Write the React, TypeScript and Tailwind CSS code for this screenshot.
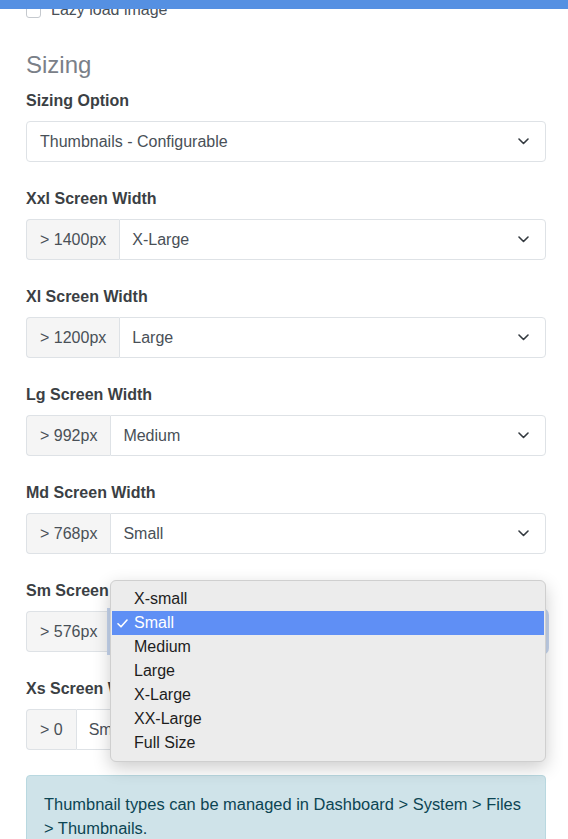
import type { ReactNode } from 'react';

const font = { fontFamily: '"Liberation Sans", Arial, sans-serif' };

function Chevron() {
  return (
    <svg className="w-[11px] h-[7px] text-[#343a40]" viewBox="0 0 11 7" fill="none" aria-hidden="true">
      <path d="M1 1l4.5 4.5L10 1" stroke="currentColor" strokeWidth="1.6" strokeLinecap="round" strokeLinejoin="round" />
    </svg>
  );
}

function SelectBox({ value, focus }: { value: string; focus?: boolean }) {
  return (
    <div
      className={
        focus
          ? 'flex-1 h-[41px] flex items-center justify-between pl-[12px] pr-[16px] border border-[#86b7fe] rounded-r-[4px] ring-[3px] ring-[#c6d5ee] bg-white text-[16px] text-[#495057]'
          : 'flex-1 h-[41px] flex items-center justify-between pl-[12px] pr-[16px] border border-[#dee2e6] rounded-r-[4px] bg-white text-[16px] text-[#495057]'
      }
    >
      <span>{value}</span>
      <Chevron />
    </div>
  );
}

function Field({ label, prefix, value, focus, children }: { label: string; prefix: string; value: string; focus?: boolean; children?: ReactNode }) {
  return (
    <div className="relative mb-[25px]">
      <div className="text-[16px] leading-6 font-bold text-[#3b3f44] mb-2">{label}</div>
      <div className="flex">
        <div className="h-[41px] flex items-center px-[13px] bg-[#f5f5f5] border border-r-0 border-[#dee2e6] rounded-l-[4px] text-[16px] text-[#495057]">
          {prefix}
        </div>
        <SelectBox value={value} focus={focus} />
      </div>
      {children}
    </div>
  );
}

const options = ['X-small', 'Small', 'Medium', 'Large', 'X-Large', 'XX-Large', 'Full Size'];

function Popup() {
  return (
    <div className="absolute left-[84px] top-[1px] w-[436px] py-[6px] bg-[#ececec] border border-[#cfcfcf] rounded-[6px] shadow-[0_6px_18px_rgba(0,0,0,0.2)] z-20">
      {options.map((o) => (
        <div
          key={o}
          className={
            o === 'Small'
              ? 'h-[24px] mx-px flex items-center bg-[#5f8ff5] text-white text-[16px]'
              : 'h-[24px] mx-px flex items-center text-[#1d1d1d] text-[16px]'
          }
        >
          <span className="w-[22px] pl-[5px] flex items-center">
            {o === 'Small' && (
              <svg className="w-[11px] h-[9px]" viewBox="0 0 11 9" fill="none" aria-hidden="true">
                <path d="M1 4.8l3 3L10 1" stroke="currentColor" strokeWidth="1.6" strokeLinecap="round" strokeLinejoin="round" />
              </svg>
            )}
          </span>
          {o}
        </div>
      ))}
    </div>
  );
}

export default function App() {
  return (
    <div className="relative min-h-[839px] bg-white overflow-hidden" style={font}>
      <div className="absolute top-0 left-0 right-0 h-[9px] bg-[#5590e2] z-30" />
      <div className="pl-[26px] pr-[22px]">
        <div className="-mt-[2px] h-6 flex items-center gap-[10px]">
          <span className="w-[15px] h-[15px] border border-[#c5c9ce] rounded-[3px] bg-white" />
          <span className="text-[16px] text-[#495057]">Lazy load image</span>
        </div>

        <h4 className="mt-[28px] mb-[10px] text-[24px] leading-[29px] text-[#7a8088]">Sizing</h4>

        <div className="mb-[25px]">
          <div className="text-[16px] leading-6 font-bold text-[#3b3f44] mb-2">Sizing Option</div>
          <div className="h-[41px] flex items-center justify-between pl-[13px] pr-[16px] border border-[#dee2e6] rounded-[4px] text-[16px] text-[#495057]">
            <span>Thumbnails - Configurable</span>
            <Chevron />
          </div>
        </div>

        <Field label="Xxl Screen Width" prefix="> 1400px" value="X-Large" />
        <Field label="Xl Screen Width" prefix="> 1200px" value="Large" />
        <Field label="Lg Screen Width" prefix="> 992px" value="Medium" />
        <Field label="Md Screen Width" prefix="> 768px" value="Small" />
        <Field label="Sm Screen Width" prefix="> 576px" value="Small" focus>
          <Popup />
        </Field>
        <Field label="Xs Screen Width" prefix="> 0" value="Small" />

        <div className="border border-[#b9d8e0] bg-[#cfe3e9] rounded-[4px] px-[17px] pt-[16px] pb-[16px] text-[16.45px] leading-6 text-[#0c4553]">
          Thumbnail types can be managed in Dashboard &gt; System &gt; Files &gt; Thumbnails.
        </div>
      </div>
    </div>
  );
}
